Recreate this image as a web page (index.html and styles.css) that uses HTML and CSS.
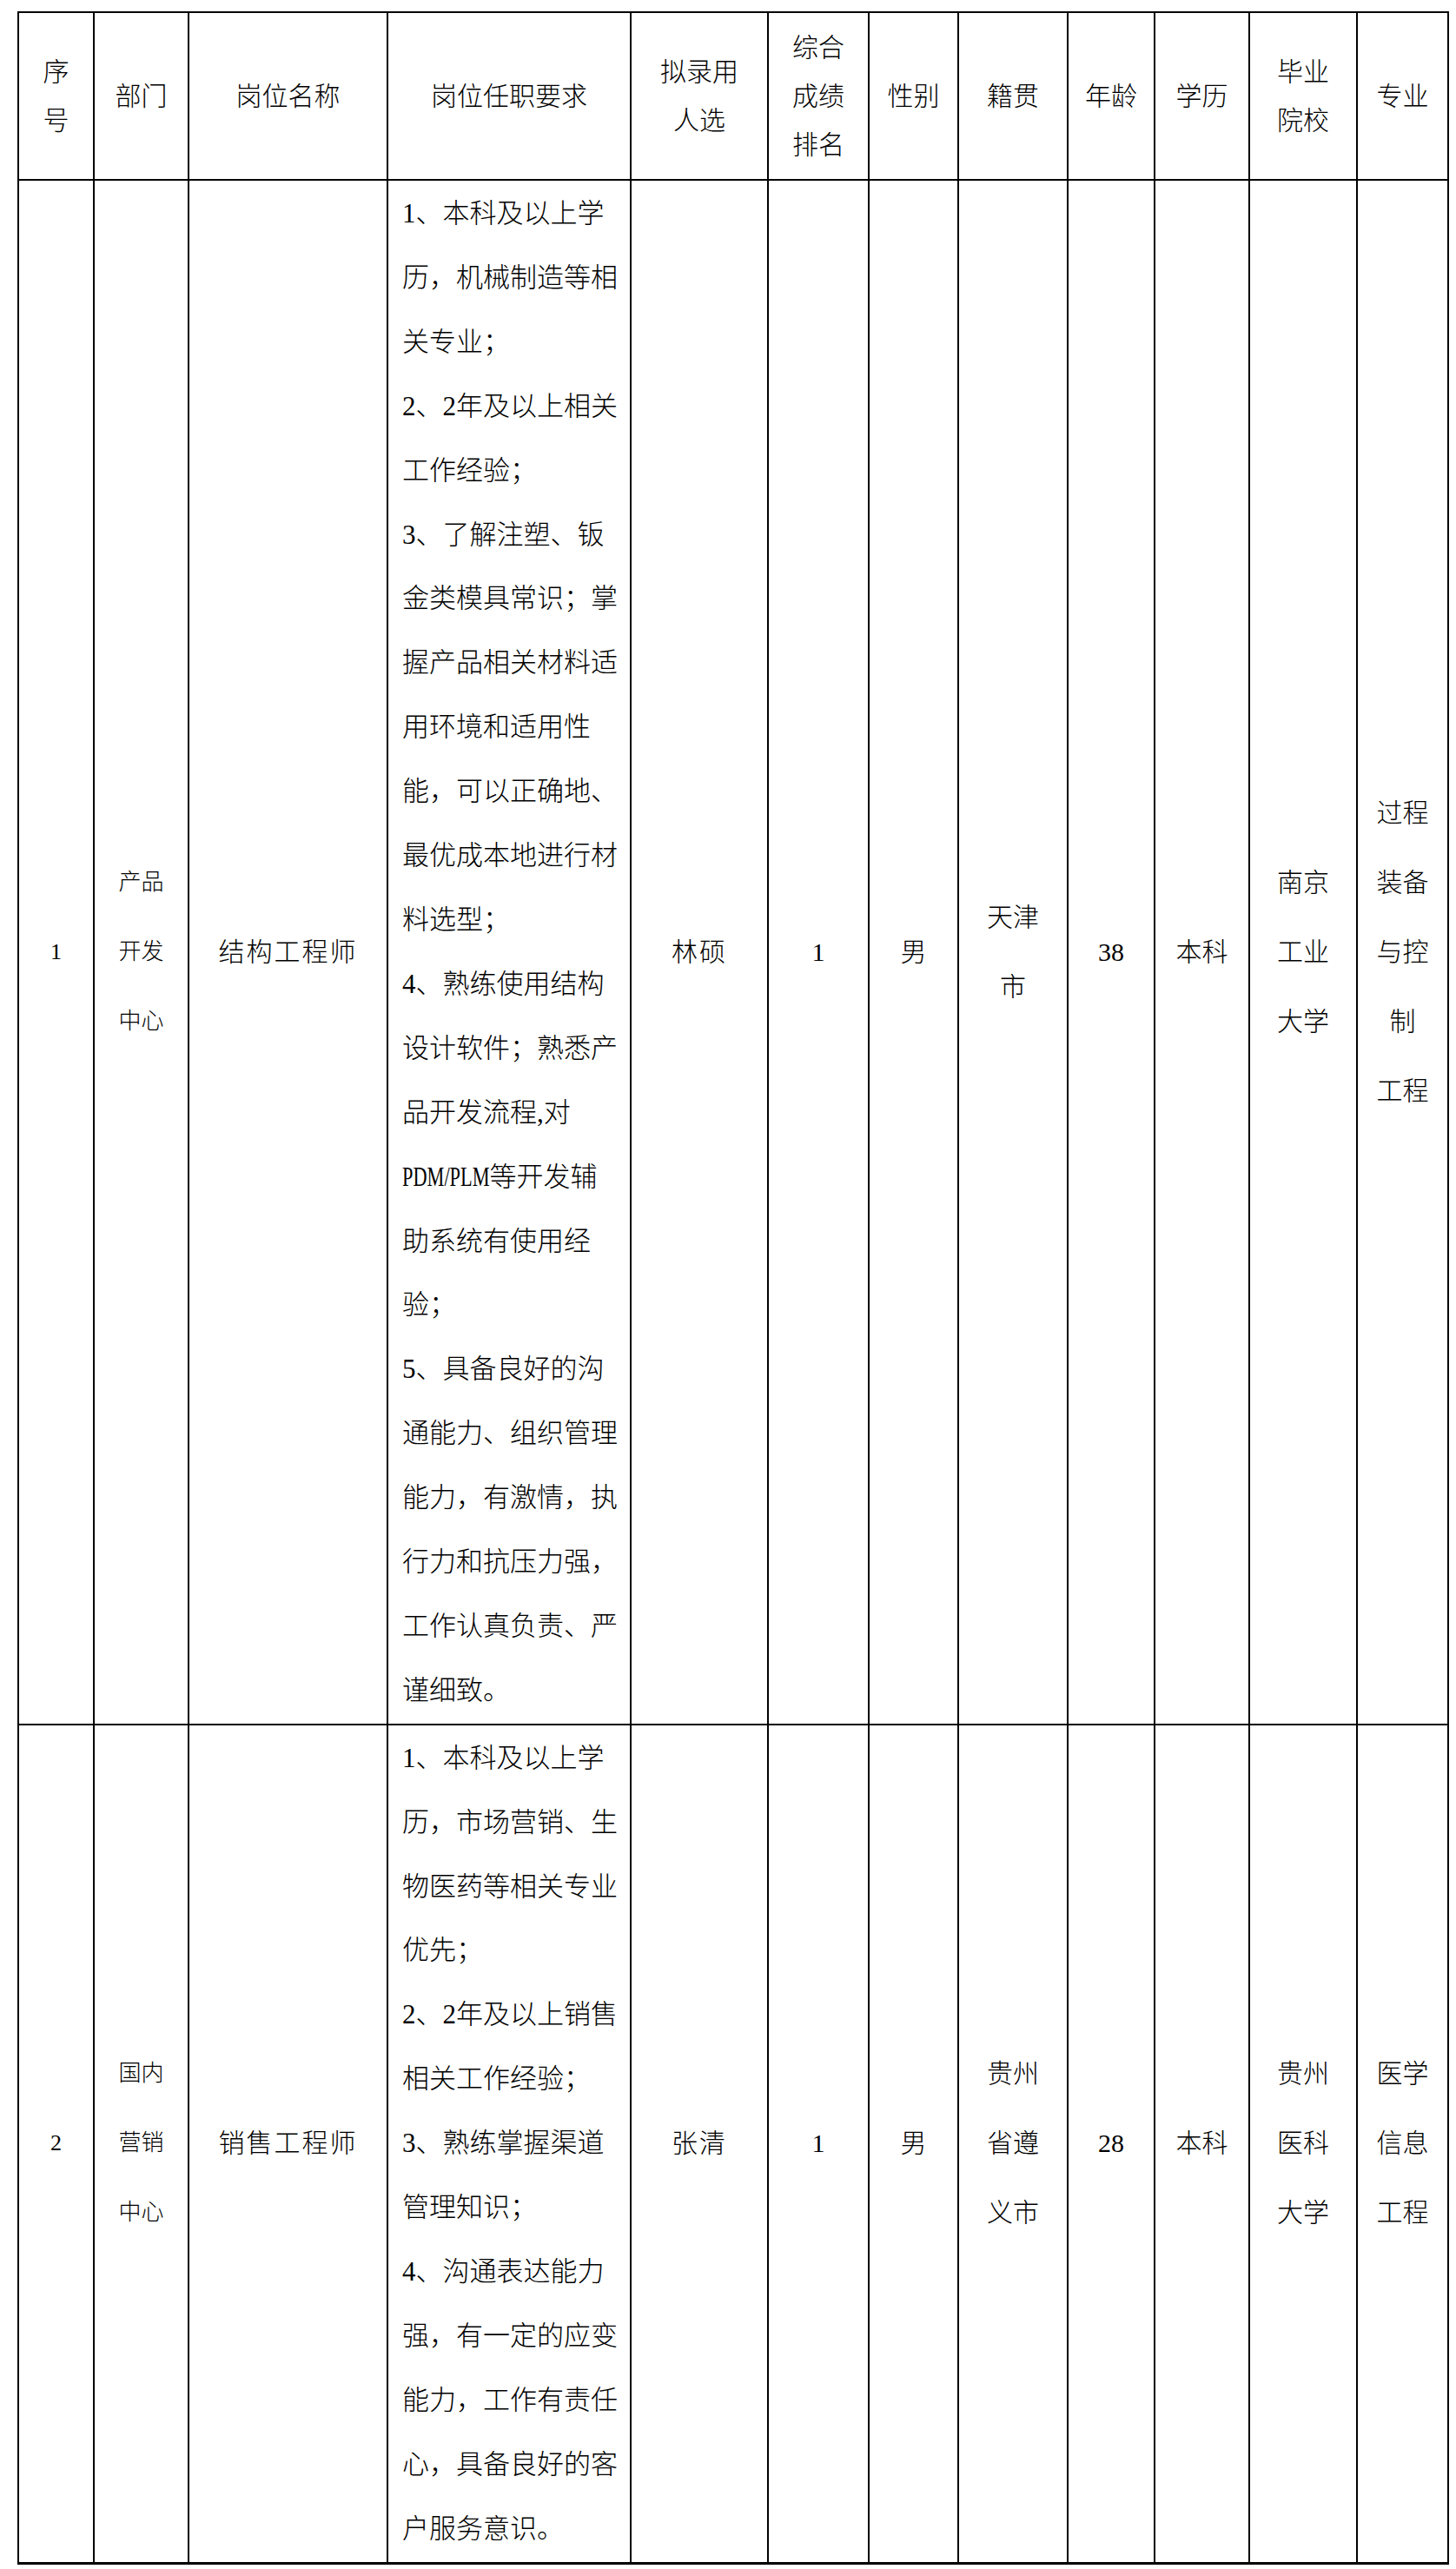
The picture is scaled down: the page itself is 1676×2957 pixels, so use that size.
FILE: index.html
```html
<!DOCTYPE html>
<html lang="zh-CN">
<head>
<meta charset="utf-8">
<title>拟录用人选公示</title>
<link rel="stylesheet" href="styles.css">
</head>
<body>
<div class="sheet">
<table class="grid">
  <colgroup>
    <col class="c-no"><col class="c-dept"><col class="c-job"><col class="c-req"><col class="c-name"><col class="c-rank">
    <col class="c-sex"><col class="c-home"><col class="c-age"><col class="c-edu"><col class="c-school"><col class="c-major">
  </colgroup>
  <thead>
    <tr class="head">
      <th>序<br>号</th>
      <th>部门</th>
      <th>岗位名称</th>
      <th>岗位任职要求</th>
      <th>拟录用<br>人选</th>
      <th>综合<br>成绩<br>排名</th>
      <th>性别</th>
      <th>籍贯</th>
      <th>年龄</th>
      <th>学历</th>
      <th>毕业<br>院校</th>
      <th>专业</th>
    </tr>
  </thead>
  <tbody>
    <tr>
      <td class="small">1</td>
      <td class="small multi">产品<br>开发<br>中心</td>
      <td class="job">结构工程师</td>
      <td class="req">1、本科及以上学<br>历，机械制造等相<br>关专业；<br>2、2年及以上相关<br>工作经验；<br>3、了解注塑、钣<br>金类模具常识；掌<br>握产品相关材料适<br>用环境和适用性<br>能，可以正确地、<br>最优成本地进行材<br>料选型；<br>4、熟练使用结构<br>设计软件；熟悉产<br>品开发流程,对<br><span class="narrow">PDM/PLM</span>等开发辅<br>助系统有使用经<br>验；<br>5、具备良好的沟<br>通能力、组织管理<br>能力，有激情，执<br>行力和抗压力强，<br>工作认真负责、严<br>谨细致。</td>
      <td class="job">林硕</td>
      <td>1</td>
      <td>男</td>
      <td class="multi">天津<br>市</td>
      <td>38</td>
      <td>本科</td>
      <td class="multi">南京<br>工业<br>大学</td>
      <td class="multi">过程<br>装备<br>与控<br>制<br>工程</td>
    </tr>
    <tr class="last">
      <td class="small">2</td>
      <td class="small multi">国内<br>营销<br>中心</td>
      <td class="job">销售工程师</td>
      <td class="req">1、本科及以上学<br>历，市场营销、生<br>物医药等相关专业<br>优先；<br>2、2年及以上销售<br>相关工作经验；<br>3、熟练掌握渠道<br>管理知识；<br>4、沟通表达能力<br>强，有一定的应变<br>能力，工作有责任<br>心，具备良好的客<br>户服务意识。</td>
      <td class="job">张清</td>
      <td>1</td>
      <td>男</td>
      <td class="multi">贵州<br>省遵<br>义市</td>
      <td>28</td>
      <td>本科</td>
      <td class="multi">贵州<br>医科<br>大学</td>
      <td class="multi">医学<br>信息<br>工程</td>
    </tr>
  </tbody>
</table>
</div>
</body>
</html>
```

FILE: styles.css
```css
html, body {
  margin: 0;
  padding: 0;
  background: #ffffff;
}

body {
  font-family: "Liberation Serif", "Noto Sans CJK SC", serif;
  color: #000000;
}

.sheet {
  padding: 13px 0 0 20px;
}

.grid {
  border-collapse: collapse;
  table-layout: fixed;
  width: 1648px;
}

.c-no { width: 87px; }
.c-dept { width: 109px; }
.c-job { width: 229px; }
.c-req { width: 280px; }
.c-name { width: 158px; }
.c-rank { width: 116px; }
.c-sex { width: 103px; }
.c-home { width: 126px; }
.c-age { width: 100px; }
.c-edu { width: 109px; }
.c-school { width: 124px; }
.c-major { width: 105px; }

.grid th,
.grid td {
  border: 2px solid #000000;
  padding: 0;
  text-align: center;
  vertical-align: middle;
  font-size: 30px;
  font-weight: 300;
  line-height: 40px;
}

.head {
  height: 193px;
}

.head th {
  line-height: 56px;
}

.grid td.multi {
  line-height: 80px;
}

.grid td.small {
  font-size: 26px;
}

.grid td.job {
  letter-spacing: 2px;
}

.grid td.req {
  text-align: left;
  padding: 1px 0 1px 16px;
  line-height: 73.9px;
  font-size: 31px;
  white-space: nowrap;
}

.narrow {
  display: inline-block;
  transform: scaleX(0.72);
  transform-origin: left center;
  margin-right: -39px;
}

.last td {
  border-bottom-width: 3px;
}
```
